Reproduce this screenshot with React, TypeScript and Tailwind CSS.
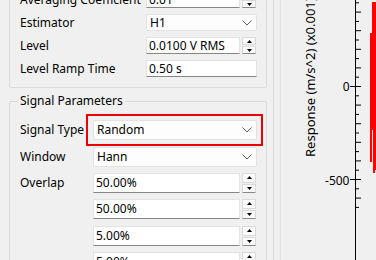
import React from 'react';

const Chevron = () => (
  <svg width="10" height="6" viewBox="0 0 10 6" className="shrink-0">
    <path d="M0.5 0.5 L5 5 L9.5 0.5" fill="none" stroke="#606060" strokeWidth="1" />
  </svg>
);

const SpinArrows = () => (
  <div className="flex w-[14px] shrink-0 flex-col gap-[1px] self-stretch">
    <div className="flex flex-1 items-center justify-center border border-[#dadada] bg-[#fbfbfb]">
      <svg width="5" height="3" viewBox="0 0 5 3">
        <path d="M2.5 0 L5 3 L0 3 Z" fill="#000" />
      </svg>
    </div>
    <div className="flex flex-1 items-center justify-center border border-[#dadada] border-b-[#8a8a8a] bg-[#fbfbfb]">
      <svg width="5" height="3" viewBox="0 0 5 3">
        <path d="M0 0 L5 0 L2.5 3 Z" fill="#000" />
      </svg>
    </div>
  </div>
);

const SpinBox = ({ value }: { value: string }) => (
  <div className="flex h-full flex-1 gap-[2px] pr-[1px]">
    <div className="flex flex-1 items-center border border-[#e3e3e3] border-b-[#868686] bg-white pl-[2px]">
      {value}
    </div>
    <SpinArrows />
  </div>
);

const Combo = ({ value }: { value: string }) => (
  <div className="flex h-full flex-1 items-center justify-between rounded-[2px] border border-[#e2e2e2] bg-[#fdfdfd] pl-[3px] pr-[4px]">
    <span>{value}</span>
    <Chevron />
  </div>
);

const LineEdit = ({ value }: { value: string }) => (
  <div className="flex h-full flex-1 items-center border border-[#e3e3e3] border-b-[#868686] bg-white pl-[2px]">
    {value}
  </div>
);

const Row = ({
  label,
  labelWidth,
  className,
  children,
}: {
  label: string;
  labelWidth: string;
  className?: string;
  children: React.ReactNode;
}) => (
  <div className={`flex items-center ${className ?? ''}`}>
    <div className={`shrink-0 whitespace-nowrap ${labelWidth}`}>{label}</div>
    {children}
  </div>
);

const ticks = Array.from({ length: 24 }, (_, i) => 500 - i * 50);

const Plot = () => {
  const y = (v: number) => 86.5 - (v * 93) / 500;
  return (
    <svg width="95" height="260" viewBox="0 0 95 260" className="block">
      <line x1="74.5" y1="0" x2="74.5" y2="260" stroke="#000" strokeWidth="1" />
      {ticks.map((v) => {
        const major = v % 500 === 0;
        const mid = v % 100 === 0;
        const x1 = major ? 69 : 74;
        const x2 = major ? 80 : mid ? 80 : 78;
        return (
          <line key={v} x1={x1} y1={y(v)} x2={x2} y2={y(v)} stroke="#000" strokeWidth="1" />
        );
      })}
      <text x="68.5" y="91" textAnchor="end" fontSize="12" fill="#000">
        0
      </text>
      <text x="68.5" y="184.5" textAnchor="end" fontSize="12" fill="#000">
        -500
      </text>
      <text transform="translate(34 157) rotate(-90)" fontSize="13" fill="#000">
        Response (m/s^2) (x0.001)
      </text>
      <polygon
        points="89,33 91,33 91,2 95,2 95,170 94,170 94,173 92,173 92,130 91,130 91,162 89,162"
        fill="#ff0000"
      />
    </svg>
  );
};

export default function App() {
  return (
    <div className="flex h-[260px] w-[376px] overflow-hidden bg-[#f0f0f0] font-['Noto_Sans',sans-serif] text-[12px] leading-[16px] text-black">
      <div className="w-[274px] shrink-0 overflow-hidden border-r border-[#dadada]">
        <div className="-mt-[20px]">
          <div className="ml-[9px] flex w-[258px] flex-col gap-[6px] rounded-[2px] border border-[#dcdcdc] pb-[10px] pl-[10px] pr-[9px] pt-[10px]">
            <Row label="Averaging Coefficient" labelWidth="w-[126px]" className="h-[17px]">
              <SpinBox value="0.01" />
            </Row>
            <Row label="Estimator" labelWidth="w-[126px]" className="h-[17px]">
              <Combo value="H1" />
            </Row>
            <Row label="Level" labelWidth="w-[126px]" className="h-[17px]">
              <SpinBox value="0.0100 V RMS" />
            </Row>
            <Row label="Level Ramp Time" labelWidth="w-[126px]" className="h-[17px]">
              <LineEdit value="0.50 s" />
            </Row>
          </div>

          <fieldset className="ml-[9px] mt-[5px] w-[258px] rounded-[2px] border border-[#dcdcdc] pb-[10px] pl-[10px] pr-[9px] pt-[11px]">
            <legend className="-ml-[2px] px-[2px] leading-[16px]">Signal Parameters</legend>
            <Row label="Signal Type" labelWidth="w-[73px]" className="h-[20px]">
              <div className="relative flex h-full flex-1">
                <Combo value="Random" />
                <div className="absolute -bottom-[6px] -left-[7px] -right-[6px] -top-[6px] border-2 border-[#ee0000]" />
              </div>
            </Row>
            <Row label="Window" labelWidth="w-[73px]" className="mt-[7px] h-[20px]">
              <Combo value="Hann" />
            </Row>
            <Row label="Overlap" labelWidth="w-[73px]" className="mt-[6px] h-[20px]">
              <SpinBox value="50.00%" />
            </Row>
            <Row label="" labelWidth="w-[73px]" className="mt-[6px] h-[20px]">
              <SpinBox value="50.00%" />
            </Row>
            <Row label="" labelWidth="w-[73px]" className="mt-[7px] h-[20px]">
              <SpinBox value="5.00%" />
            </Row>
            <Row label="" labelWidth="w-[73px]" className="mt-[6px] h-[20px]">
              <SpinBox value="5.00%" />
            </Row>
          </fieldset>
        </div>
      </div>
      <div className="ml-[6px] flex-1 border-l border-[#e0e0e0]">
        <Plot />
      </div>
    </div>
  );
}
